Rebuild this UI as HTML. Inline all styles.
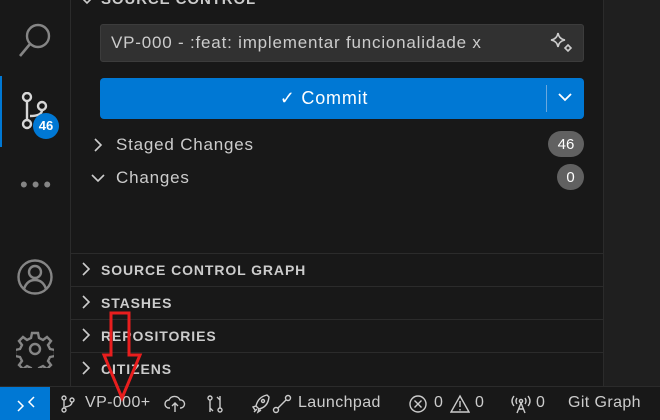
<!DOCTYPE html>
<html><head><style>
*{margin:0;padding:0;box-sizing:border-box}
body{width:660px;height:419px;background:#181818;font-family:"Liberation Sans",sans-serif;color:#ccc;position:relative;overflow:hidden}
.abs{position:absolute}
.act{left:0;top:0;width:71px;height:386px;background:#181818;border-right:1px solid #2b2b2b}
.side{left:71px;top:0;width:533px;height:386px;background:#181818}
.right{left:603px;top:0;width:57px;height:386px;background:#1f1f1f;border-left:1px solid #2b2b2b}
.status{left:0;top:386px;width:660px;height:33px;background:#181818;border-top:1px solid #2b2b2b;font-size:16px;color:#ccc;letter-spacing:0.4px}
.sec{left:71px;width:532px;height:33px;border-top:1px solid #2b2b2b;font-weight:bold;font-size:14px;letter-spacing:0.9px;color:#ccc;line-height:33px;padding-left:30px}
.badge{background:#616161;color:#fff;border-radius:13px;height:26px;line-height:27px;text-align:center;font-size:15px}
.t{font-size:17px;letter-spacing:0.8px}
</style></head><body>
<div class="abs act"></div>
<div class="abs side"></div>
<div class="abs right"></div>
<div class="abs" style="left:0;top:76px;width:2px;height:71px;background:#0078d4"></div>
<svg class="abs" style="left:18px;top:20px" width="36" height="40" viewBox="0 0 36 40"><circle cx="20" cy="16" r="11" fill="none" stroke="#858585" stroke-width="2.4"/><line x1="12" y1="24" x2="2" y2="36" stroke="#858585" stroke-width="2.6"/></svg>
<svg class="abs" style="left:18px;top:92px" width="40" height="40" viewBox="0 0 40 40" fill="none" stroke="#d7d7d7" stroke-width="2.4"><circle cx="9" cy="5" r="4"/><circle cx="24" cy="14" r="4"/><circle cx="9" cy="32" r="4"/><line x1="9" y1="9" x2="9" y2="28"/><path d="M24 18 Q24 24 12 24"/></svg>
<div class="abs" style="left:33px;top:113px;width:26px;height:26px;border-radius:13px;background:#0078d4;color:#fff;font-size:13px;font-weight:bold;text-align:center;line-height:26px">46</div>
<div class="abs" style="left:20px;top:172px;color:#858585;font-size:22px;letter-spacing:4px">•••</div>
<svg class="abs" style="left:16px;top:258px" width="38" height="38" viewBox="0 0 38 38" fill="none" stroke="#858585" stroke-width="2.4"><circle cx="19" cy="19" r="16.5"/><circle cx="19" cy="14" r="6"/><path d="M8 31 Q11 22 19 22 Q27 22 30 31"/></svg>
<svg class="abs" style="left:16px;top:330px" width="38" height="38" viewBox="0 0 38 38" fill="none" stroke="#858585" stroke-width="2.4"><path d="M16 3h6l1 5 4 2 4-3 4 4-3 4 2 4 5 1v6l-5 1-2 4 3 4-4 4-4-3-4 2-1 5h-6l-1-5-4-2-4 3-4-4 3-4-2-4-5-1v-6l5-1 2-4-3-4 4-4 4 3 4-2z"/><circle cx="19" cy="19" r="5"/></svg>

<svg class="abs" style="left:80px;top:0" width="14" height="8" viewBox="0 0 14 8"><path d="M2 -2l5 5 5-5" fill="none" stroke="#ccc" stroke-width="1.6"/></svg>
<div class="abs" style="left:101px;top:-9px;font-size:15px;font-weight:bold;letter-spacing:0.9px">SOURCE CONTROL</div>
<div class="abs t" style="left:100px;top:24px;width:484px;height:38px;background:#313131;border:1px solid #3c3c3c;border-radius:3px;line-height:36px;padding-left:10px;color:#ccc">VP-000 - :feat: implementar funcionalidade x</div>
<svg class="abs" style="left:550px;top:31px" width="24" height="24" viewBox="0 0 24 24" fill="none" stroke="#ccc" stroke-width="1.6"><path d="M8 2 Q9 8 15 9 Q9 10 8 16 Q7 10 1 9 Q7 8 8 2z"/><path d="M18 14 L21 17 L18 20 L15 17z"/></svg>
<div class="abs" style="left:100px;top:78px;width:484px;height:41px;background:#0078d4;border-radius:4px;color:#fff;font-size:18px;letter-spacing:0.8px;line-height:41px;text-align:center;padding-right:36px">✓ Commit</div>
<div class="abs" style="left:546px;top:85px;width:1px;height:27px;background:#6aa8de"></div>
<svg class="abs" style="left:557px;top:91px" width="16" height="12" viewBox="0 0 16 12"><path d="M2 3l6 6 6-6" fill="none" stroke="#fff" stroke-width="1.8"/></svg>

<svg class="abs" style="left:92px;top:137px" width="12" height="16" viewBox="0 0 12 16"><path d="M3 2l6 6-6 6" fill="none" stroke="#ccc" stroke-width="1.6"/></svg>
<div class="abs t" style="left:116px;top:135px">Staged Changes</div>
<div class="abs badge" style="left:548px;top:131px;width:36px">46</div>
<svg class="abs" style="left:90px;top:172px" width="16" height="12" viewBox="0 0 16 12"><path d="M2 3l6 6 6-6" fill="none" stroke="#ccc" stroke-width="1.6"/></svg>
<div class="abs t" style="left:116px;top:168px">Changes</div>
<div class="abs badge" style="left:557px;top:164px;width:27px">0</div>

<div class="abs sec" style="top:253px">SOURCE CONTROL GRAPH</div>
<div class="abs sec" style="top:286px">STASHES</div>
<div class="abs sec" style="top:319px">REPOSITORIES</div>
<div class="abs sec" style="top:352px">CITIZENS</div>
<svg class="abs" style="left:80px;top:260px" width="14" height="120" viewBox="0 0 14 120" fill="none" stroke="#ccc" stroke-width="1.6"><path d="M3 3l6 6-6 6M3 36l6 6-6 6M3 69l6 6-6 6M3 102l6 6-6 6"/></svg>

<div class="abs status">
 <div class="abs" style="left:0;top:0;width:50px;height:33px;background:#0078d4"></div>
 <svg class="abs" style="left:16px;top:8px" width="20" height="18" viewBox="0 0 20 18" fill="none" stroke="#fff" stroke-width="1.5"><path d="M2 6l5 5-5 5M18 2l-5 5 5 5"/></svg>
 <svg class="abs" style="left:60px;top:8px" width="16" height="18" viewBox="0 0 16 18" fill="none" stroke="#ccc" stroke-width="1.4"><circle cx="4" cy="3" r="2"/><circle cx="12" cy="5" r="2"/><circle cx="4" cy="15" r="2"/><line x1="4" y1="5" x2="4" y2="13"/><path d="M12 7Q12 11 5 12"/></svg>
 <div class="abs" style="left:85px;top:7px">VP-000+</div>
 <svg class="abs" style="left:164px;top:7px" width="22" height="20" viewBox="0 0 22 20" fill="none" stroke="#ccc" stroke-width="1.4"><path d="M6 14H5a4 4 0 0 1 0-8 6 6 0 0 1 11 0 4 4 0 0 1 1 8h-1"/><path d="M11 18V9M8 12l3-3 3 3"/></svg>
 <svg class="abs" style="left:206px;top:7px" width="18" height="20" viewBox="0 0 18 20" fill="none" stroke="#ccc" stroke-width="1.4"><circle cx="4" cy="4" r="2"/><circle cx="14" cy="16" r="2"/><path d="M4 6v12M14 14V2M4 14l3 3M14 6l-3-3"/></svg>
 <svg class="abs" style="left:250px;top:6px" width="44" height="22" viewBox="0 0 44 22" fill="none" stroke="#ccc" stroke-width="1.4"><path d="M17 2Q8 4 6 13l3 3Q18 14 19 4z"/><circle cx="13" cy="8" r="1.5"/><path d="M6 13l-3 1 2 3M9 16l-1 3 3-2M4 19l3-3"/><circle cx="38" cy="5" r="2.5"/><circle cx="26" cy="17" r="2.5"/><path d="M28 15l8-8"/></svg>
 <div class="abs" style="left:298px;top:7px">Launchpad</div>
 <svg class="abs" style="left:408px;top:7px" width="20" height="20" viewBox="0 0 20 20" fill="none" stroke="#ccc" stroke-width="1.4"><circle cx="10" cy="10" r="8"/><path d="M6.5 6.5l7 7M13.5 6.5l-7 7"/></svg>
 <div class="abs" style="left:434px;top:7px">0</div>
 <svg class="abs" style="left:450px;top:7px" width="20" height="20" viewBox="0 0 20 20" fill="none" stroke="#ccc" stroke-width="1.4"><path d="M10 2L19 18H1z M10 7v6M10 15v1.5"/></svg>
 <div class="abs" style="left:475px;top:7px">0</div>
 <svg class="abs" style="left:510px;top:6px" width="22" height="22" viewBox="0 0 22 22" fill="none" stroke="#ccc" stroke-width="1.4"><path d="M4 3Q0 8 4 13M7 5Q5 8 7 11M18 3Q22 8 18 13M15 5Q17 8 15 11"/><circle cx="11" cy="8" r="1.6"/><path d="M11 10L7 20M11 10l4 10M8.5 16h5"/></svg>
 <div class="abs" style="left:536px;top:7px">0</div>
 <div class="abs" style="left:568px;top:7px">Git Graph</div>
</div>

<svg class="abs" style="left:100px;top:310px" width="45" height="92" viewBox="0 0 45 92"><path d="M11 3 H29 V45 H40 L22 88 L4 45 H11 Z" fill="none" stroke="#e81e1e" stroke-width="3"/></svg>
</body></html>
